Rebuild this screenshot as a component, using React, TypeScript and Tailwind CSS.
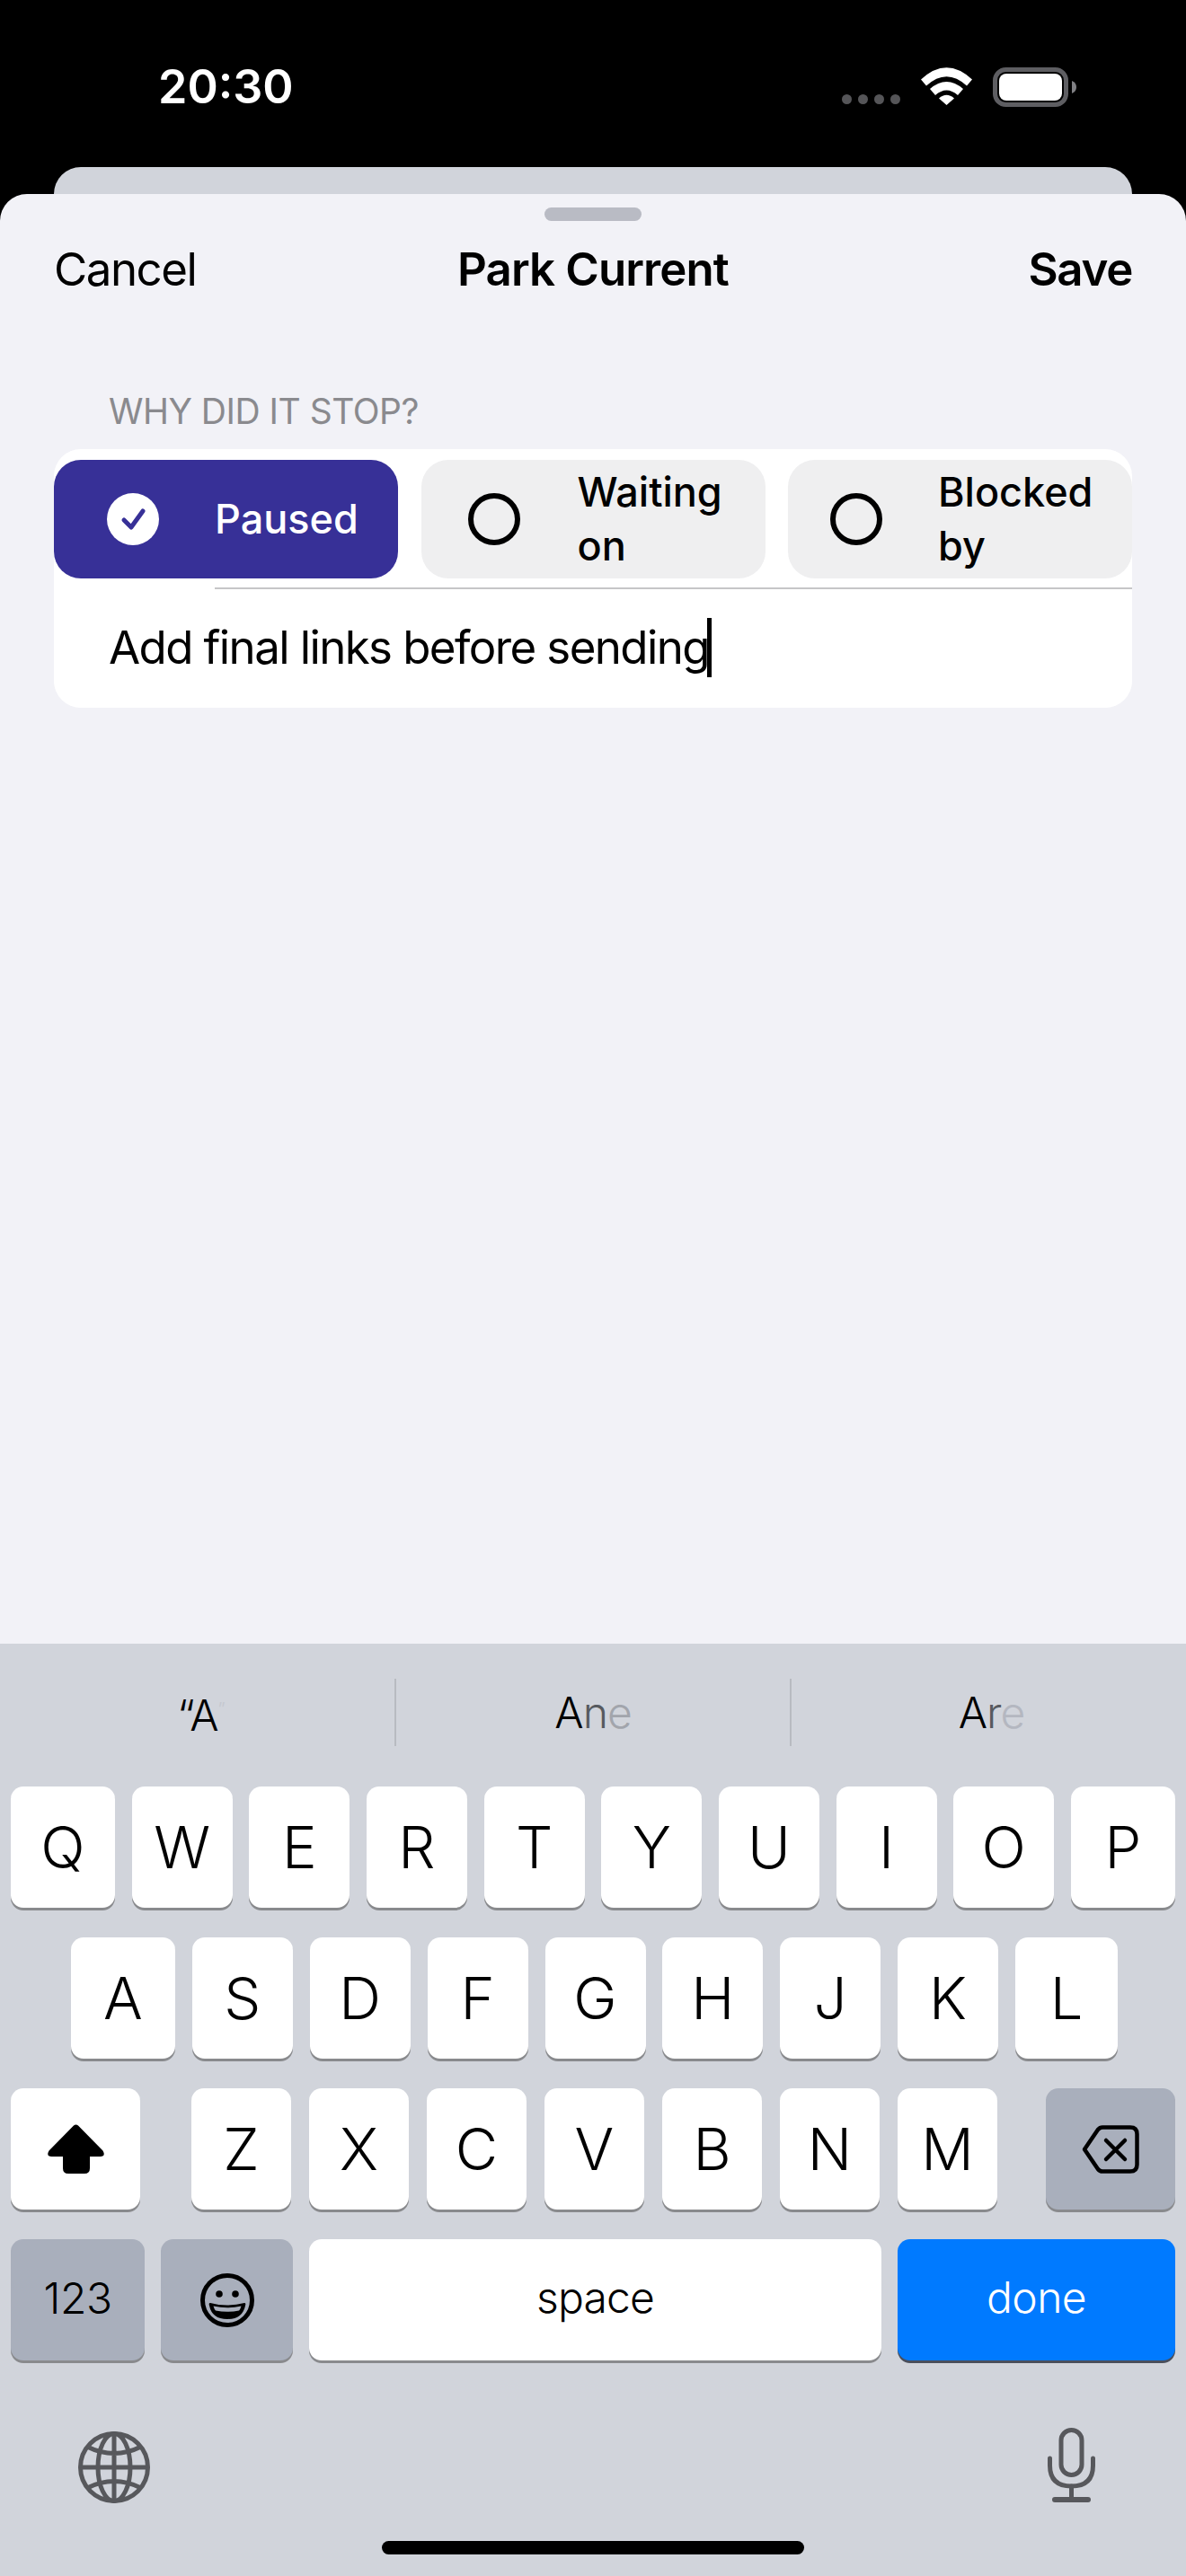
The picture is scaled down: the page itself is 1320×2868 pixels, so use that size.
const font = "font-['Inter','Liberation_Sans',sans-serif]";

function Key({ label, w, bg = "bg-white", text = "text-[65px] text-black font-[350]", shadow = "shadow-[0_3px_0_#898a8d]", children }: { label?: string; w: string; bg?: string; text?: string; shadow?: string; children?: React.ReactNode }) {
  return (
    <div className={`${w} h-[135px] rounded-[14px] ${bg} ${shadow} flex items-center justify-center ${text}`}>
      {label}
      {children}
    </div>
  );
}

function Row({ keys, className }: { keys: [string, string][]; className: string }) {
  return (
    <div className={`flex justify-between ${className}`}>
      {keys.map(([k, w]) => (
        <Key key={k} label={k} w={w} />
      ))}
    </div>
  );
}

function Wifi() {
  return (
    <svg width="57" height="42" viewBox="0 0 57 42" fill="#fff">
      <path d="M0 13.5 Q28.5 -13 57 13.5 L51 20.5 Q28.5 0 6 20.5 Z" />
      <path d="M10 24 Q28.5 8 47 24 L41 31 Q28.5 20 16 31 Z" />
      <path d="M20 34.5 Q28.5 27 37 34.5 L28.5 42 Z" />
    </svg>
  );
}

function Battery() {
  return (
    <svg width="94" height="44" viewBox="0 0 94 44">
      <rect x="2.5" y="2.5" width="79" height="39" rx="12" fill="none" stroke="#5e5e62" strokeWidth="5" />
      <rect x="7" y="7" width="70" height="30" rx="8" fill="#fff" />
      <path d="M88 15 Q93 17 93 22 Q93 27 88 29 Z" fill="#808084" />
    </svg>
  );
}

function Radio() {
  return (
    <svg width="58" height="58" viewBox="0 0 58 58" className="shrink-0">
      <circle cx="29" cy="29" r="26" fill="none" stroke="#000" strokeWidth="6" />
    </svg>
  );
}

function Check() {
  return (
    <svg width="58" height="58" viewBox="0 0 58 58" className="shrink-0">
      <circle cx="29" cy="29" r="29" fill="#fff" />
      <path d="M19 30 L27 38 L40 20" fill="none" stroke="#373097" strokeWidth="5" strokeLinecap="round" strokeLinejoin="round" />
    </svg>
  );
}

const row1: [string, string][] = [["Q", "w-[116px]"], ["W", "w-[112px]"], ["E", "w-[112px]"], ["R", "w-[112px]"], ["T", "w-[112px]"], ["Y", "w-[112px]"], ["U", "w-[112px]"], ["I", "w-[112px]"], ["O", "w-[112px]"], ["P", "w-[116px]"]];
const row2: [string, string][] = [["A", "w-[116px]"], ["S", "w-[112px]"], ["D", "w-[112px]"], ["F", "w-[112px]"], ["G", "w-[112px]"], ["H", "w-[112px]"], ["J", "w-[112px]"], ["K", "w-[112px]"], ["L", "w-[114px]"]];
const row3: [string, string][] = [["Z", "w-[111px]"], ["X", "w-[111px]"], ["C", "w-[111px]"], ["V", "w-[111px]"], ["B", "w-[111px]"], ["N", "w-[111px]"], ["M", "w-[111px]"]];

export default function App() {
  return (
    <div className={`w-[1320px] h-[2868px] bg-black flex flex-col overflow-hidden ${font}`}>
      <div className="h-[186px] shrink-0 flex items-start justify-between pl-[176px] pr-[121px] pt-[66px]">
        <span className="text-white text-[52px] font-semibold leading-[62px]">20:30</span>
        <div className="flex items-start pt-[9px]">
          <div className="flex gap-[7px] mt-[30px] mr-[23px]">
            <span className="w-[11px] h-[11px] rounded-full bg-[#555558]" />
            <span className="w-[11px] h-[11px] rounded-full bg-[#555558]" />
            <span className="w-[11px] h-[11px] rounded-full bg-[#555558]" />
            <span className="w-[11px] h-[11px] rounded-full bg-[#555558]" />
          </div>
          <Wifi />
          <div className="ml-[23px]">
            <Battery />
          </div>
        </div>
      </div>
      <div className="mx-[60px] h-[30px] rounded-t-[30px] bg-[#d1d4db] shrink-0" />
      <div className="flex-1 rounded-t-[30px] bg-[#f2f2f7] flex flex-col">
        <div className="flex justify-center pt-[15px]">
          <span className="w-[108px] h-[15px] rounded-full bg-[#b9bbc4]" />
        </div>
        <div className="grid grid-cols-[1fr_auto_1fr] items-center px-[60px] h-[62px] mt-[23px] text-[51px] leading-[62px] text-black">
          <span className="tracking-[-1.5px]">Cancel</span>
          <span className="font-semibold tracking-[-0.9px]">Park Current</span>
          <span className="font-semibold tracking-[-1.3px] justify-self-end">Save</span>
        </div>
        <div className="mt-[104px] pl-[121px] text-[39px] leading-[46px] text-[#8a8a8e] tracking-[-0.5px]">WHY DID IT STOP?</div>
        <div className="mt-[19px] mx-[60px] h-[288px] bg-white rounded-[30px] pt-[12px] flex flex-col">
          <div className="flex justify-between h-[132px] text-[45px] leading-[60px] font-medium">
            <div className="w-[383px] rounded-[30px] bg-[#373097] text-white flex items-center pl-[59px]">
              <Check />
              <span className="ml-[62px]">Paused</span>
            </div>
            <div className="w-[383px] rounded-[30px] bg-[#efeff0] text-black flex items-center pl-[52px]">
              <Radio />
              <span className="ml-[64px]">Waiting<br />on</span>
            </div>
            <div className="w-[383px] rounded-[30px] bg-[#efeff0] text-black flex items-center pl-[47px]">
              <Radio />
              <span className="ml-[62px]">Blocked<br />by</span>
            </div>
          </div>
          <div className="ml-[179px] mt-[10px] h-[2px] bg-[#c6c6c8]" />
          <div className="pl-[61px] mt-[32px] h-[66px] flex items-center text-[51px] text-black tracking-[-1.6px]">
            <span>Add final links before sending</span>
            <span className="w-[5px] h-[66px] bg-black -ml-[2px]" />
          </div>
        </div>
        <div className="flex-1" />
        <div className="h-[1038px] shrink-0 bg-[#d1d4db] flex flex-col relative">
          <div className="flex h-[75px] mt-[39px] text-[48px] leading-[75px] text-black tracking-[-1px] font-[350]">
            <div className="w-[439px] flex items-center justify-center pl-[8px]">
              <span>“A<span className="text-[#c4c7ce] text-[20px] align-super">”</span></span>
            </div>
            <div className="w-[2px] bg-[#b8bbc1]" />
            <div className="w-[438px] flex items-center justify-center">
              <span>A<span className="text-[#575a5f]">n</span><span className="text-[#a2a5ac]">e</span></span>
            </div>
            <div className="w-[2px] bg-[#b8bbc1]" />
            <div className="flex-1 flex items-center justify-center pl-[6px]">
              <span>A<span className="text-[#575a5f]">r</span><span className="text-[#b4b7c0]">e</span></span>
            </div>
          </div>
          <Row keys={row1} className="mt-[45px] px-[12px]" />
          <Row keys={row2} className="mt-[33px] pl-[79px] pr-[76px]" />
          <div className="mt-[33px] px-[12px] flex">
            <Key w="w-[144px]">
              <svg width="63" height="55" viewBox="0 0 63 55">
                <path d="M29 1.5 Q31.5 -0.5 34 1.5 L61.5 29.5 Q65 36 58.5 36 L47 36 L47 49 Q47 55 41 55 L23 55 Q17 55 17 49 L17 36 L4.5 36 Q-2 36 1.5 29.5 Z" fill="#000" />
              </svg>
            </Key>
            <div className="flex gap-[20px] ml-[57px]">
              {row3.map(([k, w]) => (
                <Key key={k} label={k} w={w} />
              ))}
            </div>
            <div className="ml-auto">
              <Key w="w-[144px]" bg="bg-[#a9afbc]">
                <svg width="64" height="54" viewBox="0 0 64 54" fill="none" stroke="#000" strokeWidth="4.5" strokeLinejoin="round" strokeLinecap="round">
                  <path d="M23 2.5 L54 2.5 Q61.5 2.5 61.5 10 L61.5 44 Q61.5 51.5 54 51.5 L23 51.5 Q20 51.5 18 49 L3 27 L18 5 Q20 2.5 23 2.5 Z" />
                  <path d="M27 17 L48 38 M48 17 L27 38" />
                </svg>
              </Key>
            </div>
          </div>
          <div className="mt-[33px] px-[12px] flex justify-between">
            <Key w="w-[149px]" label="123" bg="bg-[#a9afbc]" text="text-[48px] text-black font-[350] pb-[3px] tracking-[-0.5px]" />
            <Key w="w-[147px]" bg="bg-[#a9afbc]">
              <svg width="60" height="60" viewBox="0 0 60 60">
                <circle cx="30" cy="30" r="27.5" fill="none" stroke="#000" strokeWidth="5" />
                <circle cx="21" cy="23" r="3.8" fill="#000" />
                <circle cx="39" cy="23" r="3.8" fill="#000" />
                <path d="M11 33 Q30 38 49 33 Q51 33 50 36 Q47 51 30 51 Q13 51 10 36 Q9 33 11 33 Z" fill="#000" />
                <path d="M14.5 36.5 Q30 40 45.5 36.5 Q44.5 40 43 41.5 Q30 44 17 41.5 Q15.5 40 14.5 36.5 Z" fill="#a9afbc" />
              </svg>
            </Key>
            <Key w="w-[637px]" label="space" text="text-[48px] text-black font-[350] pb-[5px] tracking-[-0.8px]" />
            <Key w="w-[309px]" label="done" bg="bg-[#007aff]" text="text-[48px] text-white font-[350] pb-[5px] tracking-[-0.6px]" shadow="shadow-[0_3px_0_#4a4f5c]" />
          </div>
          <div className="mt-[75px] pl-[87px] pr-[100px] flex justify-between items-start">
            <svg width="80" height="80" viewBox="0 0 80 80" fill="none" stroke="#57585c" strokeWidth="5" className="mt-[4px]">
              <circle cx="40" cy="40" r="37.5" />
              <ellipse cx="40" cy="40" rx="18" ry="37.5" />
              <path d="M40 2 V78 M2 40 H78 M10 17 Q40 32 70 17 M10 63 Q40 48 70 63" />
            </svg>
            <svg width="55" height="84" viewBox="0 0 55 84" fill="none" stroke="#57585c" strokeWidth="5" strokeLinecap="round">
              <rect x="16" y="2.5" width="23" height="50" rx="11.5" />
              <path d="M3.5 34 V42 Q3.5 65 27.5 65 Q51.5 65 51.5 42 V34" />
              <path d="M27.5 65 V79" />
              <path d="M9 80 H46" strokeWidth="6" />
            </svg>
          </div>
          <div className="absolute left-[425px] top-[999px] w-[470px] h-[15px] rounded-full bg-black" />
        </div>
      </div>
    </div>
  );
}
